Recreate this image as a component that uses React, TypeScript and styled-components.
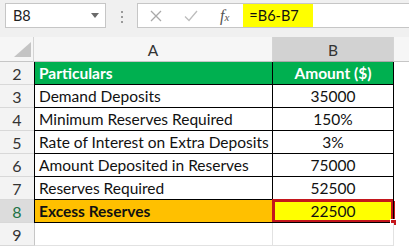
import React from "react";
import styled, { createGlobalStyle, css } from "styled-components";

const Global = createGlobalStyle`
  html, body { margin: 0; padding: 0; background: #fff; }
  #root { width: 409px; height: 246px; overflow: hidden; }
`;

const Page = styled.div`
  width: 409px;
  height: 246px;
  overflow: hidden;
  background: #fff;
  font-family: Lato, "Liberation Sans", sans-serif;
`;

const Toolbar = styled.div`
  display: flex;
  align-items: flex-start;
  height: 37px;
  box-sizing: border-box;
  padding: 3px 0 0 5px;
  background: #f0f0f0;
`;

const NameBox = styled.div`
  width: 101px;
  height: 25px;
  box-sizing: border-box;
  border: 1px solid #c6c6c6;
  background: #fff;
  display: flex;
  align-items: center;
  justify-content: space-between;
  padding: 0 6px 0 7px;
  font-size: 14.5px;
  color: #222;
`;

const Dots = styled.div`
  display: flex;
  flex-direction: column;
  gap: 3px;
  margin: 8px 14px 0 15px;
  & > span {
    width: 2px;
    height: 2px;
    background: #9a9a9a;
  }
`;

const FormulaBox = styled.div`
  flex: 1;
  height: 25px;
  box-sizing: border-box;
  border: 1px solid #c6c6c6;
  border-right: none;
  background: #fff;
  display: flex;
  align-items: center;
  padding-left: 12px;
`;

const IconSlot = styled.span<{ $gap: number }>`
  display: inline-flex;
  margin-right: ${(p) => p.$gap}px;
`;

const Fx = styled.span`
  font-family: "Liberation Serif", serif;
  font-style: italic;
  font-size: 16px;
  color: #555;
  margin-right: 14px;
  & > small {
    font-size: 11px;
  }
`;

const FormulaText = styled.div`
  width: 70px;
  height: 23px;
  box-sizing: border-box;
  background: #ffff00;
  display: flex;
  align-items: center;
  padding-left: 6px;
  font-size: 14.5px;
  color: #111;
`;

const Sheet = styled.div`
  display: grid;
  grid-template-columns: 34px 239px 121px 1fr;
  grid-template-rows: 25px repeat(8, 23px);
  font-size: 15.5px;
`;

const Corner = styled.div`
  background: #f6f6f6;
  border-right: 1px solid #d4d4d4;
  border-bottom: 1px solid #c6c6c6;
  box-sizing: border-box;
  display: flex;
  justify-content: flex-end;
  align-items: flex-end;
  padding: 0 2px 4px 0;
`;

const ColHead = styled.div<{ $sel?: boolean; $blank?: boolean }>`
  box-sizing: border-box;
  background: ${(p) => (p.$sel ? "#d2d2d2" : "#f6f6f6")};
  border-right: ${(p) => (p.$blank ? "none" : "1px solid #d4d4d4")};
  border-bottom: 1px solid ${(p) => (p.$sel ? "#a8a8a8" : "#c6c6c6")};
  display: flex;
  align-items: center;
  justify-content: center;
  color: #333;
  padding-top: 2px;
`;

const RowHead = styled.div<{ $sel?: boolean }>`
  box-sizing: border-box;
  background: ${(p) => (p.$sel ? "#dcdcdc" : "#f3f3f3")};
  border-bottom: 1px solid #d8d8d8;
  display: flex;
  align-items: center;
  justify-content: center;
  font-size: 16px;
  color: ${(p) => (p.$sel ? "#217346" : "#333")};
`;

const Cell = styled.div<{
  $col: "a" | "b";
  $fill?: string;
  $bold?: boolean;
  $color?: string;
  $empty?: boolean;
  $selected?: boolean;
}>`
  position: relative;
  box-sizing: border-box;
  display: flex;
  align-items: center;
  white-space: nowrap;
  background: ${(p) => p.$fill || "#fff"};
  color: ${(p) => p.$color || "#111"};
  font-weight: ${(p) => (p.$bold ? 700 : 400)};
  justify-content: ${(p) => (p.$col === "b" ? "center" : "flex-start")};
  padding-left: ${(p) => (p.$col === "a" ? "4px" : "0")};
  border-right: 1px solid ${(p) => (p.$empty ? "#e2e2e2" : "#000")};
  border-bottom: 1px solid ${(p) => (p.$empty ? "#e2e2e2" : "#000")};
  ${(p) =>
    p.$col === "a" &&
    css`
      border-left: 1px solid ${p.$empty ? "#c6c6c6" : "#000"};
    `}
  ${(p) =>
    p.$selected &&
    css`
      box-shadow: inset 0 0 0 2px #c4161c, -1px -1px 0 0 #c4161c,
        1px 1px 0 0 #c4161c;
      &::after {
        content: "";
        position: absolute;
        right: -3px;
        bottom: -3px;
        width: 5px;
        height: 5px;
        background: #c4161c;
        border: 1px solid #fff;
        border-width: 1px 0 0 1px;
      }
    `}
`;

const Filler = styled.div`
  background: #fff;
`;

type Row = {
  n: number;
  a: string;
  b: string;
  kind?: "head" | "total";
};

const rows: Row[] = [
  { n: 2, a: "Particulars", b: "Amount ($)", kind: "head" },
  { n: 3, a: "Demand Deposits", b: "35000" },
  { n: 4, a: "Minimum Reserves Required", b: "150%" },
  { n: 5, a: "Rate of Interest on Extra Deposits", b: "3%" },
  { n: 6, a: "Amount Deposited in Reserves", b: "75000" },
  { n: 7, a: "Reserves Required", b: "52500" },
  { n: 8, a: "Excess Reserves", b: "22500", kind: "total" },
];

const CrossIcon = () => (
  <svg width="12" height="12" viewBox="0 0 12 12">
    <path d="M1 1 L11 11 M11 1 L1 11" stroke="#a9a9a9" strokeWidth="1.3" fill="none" />
  </svg>
);

const CheckIcon = () => (
  <svg width="14" height="12" viewBox="0 0 14 12">
    <path d="M1 6.5 L5 10.5 L13 1" stroke="#bdbdbd" strokeWidth="1.3" fill="none" />
  </svg>
);

const DropArrow = () => (
  <svg width="8" height="5" viewBox="0 0 8 5">
    <path d="M0 0 L8 0 L4 5 Z" fill="#6a6a6a" />
  </svg>
);

const CornerTriangle = () => (
  <svg width="17" height="15" viewBox="0 0 17 15">
    <path d="M0 15 L17 15 L17 0 Z" fill="#c4c4c4" />
  </svg>
);

export default function App() {
  return (
    <Page>
      <Global />
      <Toolbar>
        <NameBox>
          <span>B8</span>
          <DropArrow />
        </NameBox>
        <Dots>
          <span />
          <span />
          <span />
        </Dots>
        <FormulaBox>
          <IconSlot $gap={22}>
            <CrossIcon />
          </IconSlot>
          <IconSlot $gap={22}>
            <CheckIcon />
          </IconSlot>
          <Fx>
            f<small>x</small>
          </Fx>
          <FormulaText>=B6-B7</FormulaText>
        </FormulaBox>
      </Toolbar>
      <Sheet>
        <Corner>
          <CornerTriangle />
        </Corner>
        <ColHead>A</ColHead>
        <ColHead $sel>B</ColHead>
        <ColHead $blank />
        {rows.map((r) => {
          const head = r.kind === "head";
          const total = r.kind === "total";
          return (
            <React.Fragment key={r.n}>
              <RowHead $sel={total}>{r.n}</RowHead>
              <Cell
                $col="a"
                $fill={head ? "#00b050" : total ? "#ffc000" : undefined}
                $color={head ? "#fff" : undefined}
                $bold={head || total}
              >
                {r.a}
              </Cell>
              <Cell
                $col="b"
                $fill={head ? "#00b050" : total ? "#ffff00" : undefined}
                $color={head ? "#fff" : undefined}
                $bold={head}
                $selected={total}
              >
                {r.b}
              </Cell>
              <Filler />
            </React.Fragment>
          );
        })}
        <RowHead>9</RowHead>
        <Cell $col="a" $empty />
        <Cell $col="b" $empty />
        <Filler />
      </Sheet>
    </Page>
  );
}
